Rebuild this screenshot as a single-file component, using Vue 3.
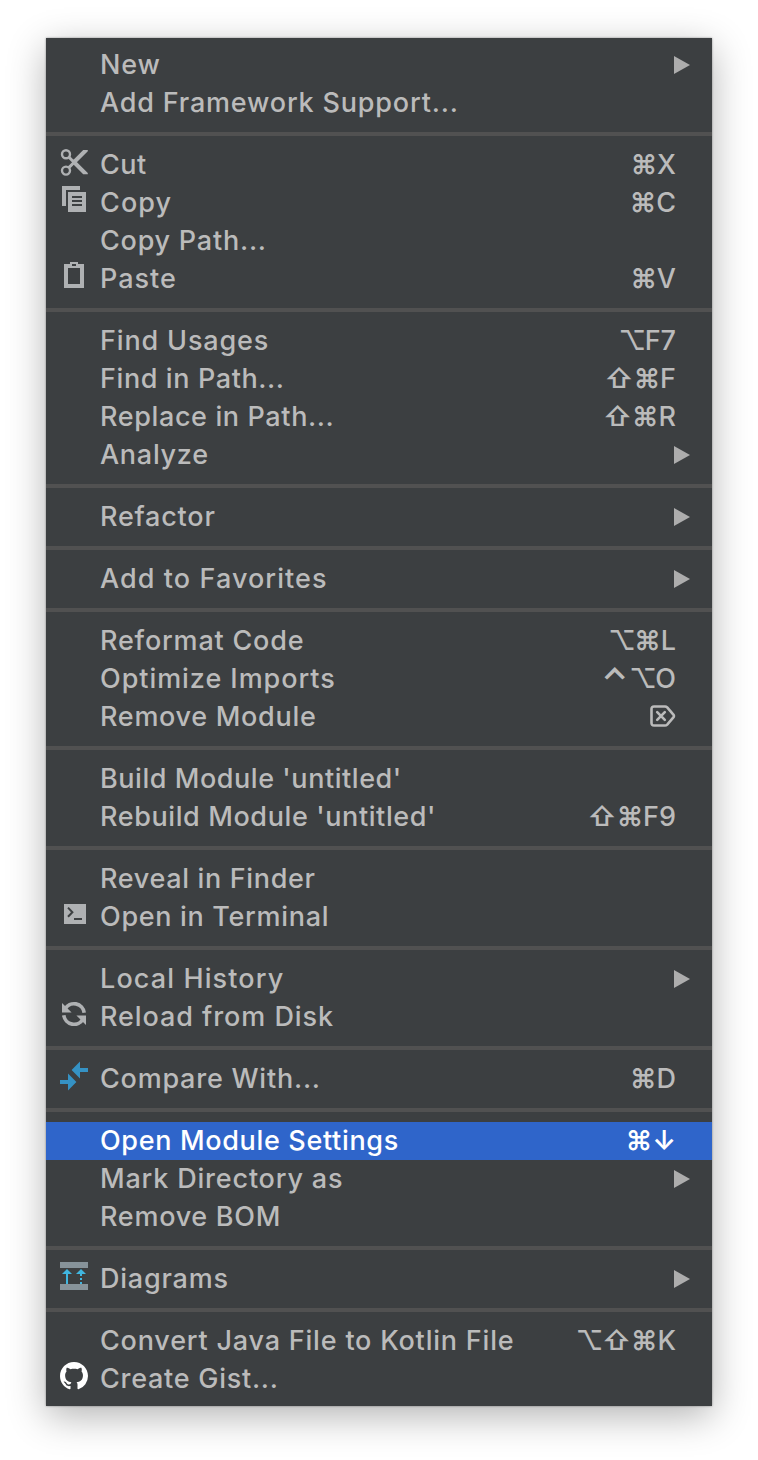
<script setup>
const groups = [
  [{ label: 'New', track: 0.8, sub: true }, { label: 'Add Framework Support...', track: 0.81 }],
  [
    { label: 'Cut', track: 0.5, icon: 'cut', keys: '⌘X' },
    { label: 'Copy', track: 1.1, icon: 'copy', keys: '⌘C' },
    { label: 'Copy Path...', track: 0.77 },
    { label: 'Paste', track: 1, icon: 'paste', keys: '⌘V' },
  ],
  [
    { label: 'Find Usages', track: 0.85, keys: '⌥F7' },
    { label: 'Find in Path...', track: 0.6, keys: '⇧⌘F' },
    { label: 'Replace in Path...', track: 0.62, keys: '⇧⌘R' },
    { label: 'Analyze', track: 0.72, sub: true },
  ],
  [{ label: 'Refactor', track: 0.78, sub: true }],
  [{ label: 'Add to Favorites', track: 1.08, sub: true }],
  [
    { label: 'Reformat Code', track: 0.8, keys: '⌥⌘L' },
    { label: 'Optimize Imports', track: 0.94, keys: '⌃⌥O' },
    { label: 'Remove Module', track: 0.7, keys: '⌦' },
  ],
  [
    { label: "Build Module 'untitled'", track: 0.55 },
    { label: "Rebuild Module 'untitled'", track: 0.6, keys: '⇧⌘F9' },
  ],
  [
    { label: 'Reveal in Finder', track: 0.66 },
    { label: 'Open in Terminal', track: 0.68, icon: 'terminal' },
  ],
  [
    { label: 'Local History', track: 1.12, sub: true },
    { label: 'Reload from Disk', track: 0.93, icon: 'reload' },
  ],
  [{ label: 'Compare With...', track: 0.77, icon: 'compare', keys: '⌘D' }],
  [
    { label: 'Open Module Settings', track: 0.66, keys: '⌘↓', active: true },
    { label: 'Mark Directory as', track: 0.81, sub: true },
    { label: 'Remove BOM', track: 0.72 },
  ],
  [{ label: 'Diagrams', track: 0.78, icon: 'diagrams', sub: true }],
  [
    { label: 'Convert Java File to Kotlin File', track: 0.8, keys: '⌥⇧⌘K' },
    { label: 'Create Gist...', track: 0.73, icon: 'github' },
  ],
]

const keyClass = { '⌃': 'symbol caret', '⌥': 'option', '⌘': 'symbol', '⇧': 'symbol', '↓': 'symbol' }
</script>

<template>
  <main class="stage">
    <div class="menu">
      <div v-for="(group, g) in groups" :key="g" class="group">
        <div v-for="item in group" :key="item.label" class="row" :class="{ active: item.active }">
          <svg class="icon" viewBox="0 0 32 38">
            <g v-if="item.icon === 'cut'" fill="none" stroke="#afb1b3">
              <circle cx="8" cy="8.2" r="4" stroke-width="2.4" />
              <circle cx="8" cy="24.6" r="4" stroke-width="2.4" />
              <path d="M10.8 11L15 15.2M10.8 21.6L15.5 17" stroke-width="3" />
              <path d="M25.2 4H29.8V5.2L18.8 16.2L16 13.2ZM14 14.2L16 13.2L29.8 27V28.2H25.2L14 17Z" fill="#afb1b3" stroke="none" />
            </g>
            <g v-else-if="item.icon === 'copy'" fill="#afb1b3">
              <path d="M4 2H22V6H8V22H4Z" />
              <path fill-rule="evenodd" d="M10 8H28V28H10ZM14 12V14H24V12ZM14 16V18H24V16ZM14 20V22H24V20Z" />
            </g>
            <path v-else-if="item.icon === 'paste'" fill="#afb1b3" fill-rule="evenodd" d="M6 4H12V2H20V4H26V28H6ZM14 4V6H18V4ZM10 8V24H22V8Z" />
            <g v-else-if="item.icon === 'terminal'">
              <path fill="#afb1b3" d="M6 6H28V26H6Z" />
              <path d="M10 9.6L14.4 14.2L10 18.8M16 21H24" fill="none" stroke="#3c3f41" stroke-width="2" />
            </g>
            <g v-else-if="item.icon === 'reload'">
              <path d="M7 11.2A10.2 10.2 0 0 1 26.2 14.8M25 20.8A10.2 10.2 0 0 1 5.8 17.2" fill="none" stroke="#afb1b3" stroke-width="3.6" />
              <path fill="#afb1b3" d="M4 5V14.6H13.6ZM28 27V17.4H18.4Z" />
            </g>
            <path v-else-if="item.icon === 'compare'" fill="#3592c4" d="M13.6 10L22 1.6V8H30V12H22V18.4ZM18.4 22L10 30.4V24H2V20H10V13.6Z" />
            <g v-else-if="item.icon === 'diagrams'">
              <path fill="#87939a" d="M2 2H30V8H2ZM2 24H30V30H2Z" />
              <path fill="#40b6e0" d="M9 9L14 14H10V24H8V14H4ZM23 9L28 14H24V16H22V14H18ZM22 18H24V20H22ZM22 22H24V24H22Z" />
            </g>
            <path
              v-else-if="item.icon === 'github'"
              fill="#fff"
              transform="translate(2 2) scale(1.75)"
              d="M8 0C3.58 0 0 3.58 0 8c0 3.54 2.29 6.53 5.47 7.59.4.07.55-.17.55-.38 0-.19-.01-.82-.01-1.49-2.01.37-2.53-.49-2.69-.94-.09-.23-.48-.94-.82-1.13-.28-.15-.68-.52-.01-.53.63-.01 1.08.58 1.23.82.72 1.21 1.87.87 2.33.66.07-.52.28-.87.51-1.07-1.78-.2-3.64-.89-3.64-3.95 0-.87.31-1.59.82-2.15-.08-.2-.36-1.02.08-2.12 0 0 .67-.21 2.2.82.64-.18 1.32-.27 2-.27s1.36.09 2 .27c1.53-1.04 2.2-.82 2.2-.82.44 1.1.16 1.92.08 2.12.51.56.82 1.27.82 2.15 0 3.07-1.87 3.75-3.65 3.95.29.25.54.73.54 1.48 0 1.07-.01 1.93-.01 2.2 0 .21.15.46.55.38A8.01 8.01 0 0 0 16 8c0-4.42-3.58-8-8-8Z"
            />
          </svg>
          <span class="label" :style="{ letterSpacing: item.track + 'px' }">{{ item.label }}</span>
          <svg v-if="item.keys === '⌦'" class="delete-key" viewBox="0 0 26 22" aria-label="Delete">
            <path d="M4 1.5H15Q16.3 1.5 17.2 2.4L23.6 9.8Q24.4 11 23.6 12.2L17.2 19.6Q16.3 20.5 15 20.5H4Q1.5 20.5 1.5 18V4Q1.5 1.5 4 1.5Z" />
            <path d="M7.2 7.2L14.8 14.8M14.8 7.2L7.2 14.8" />
          </svg>
          <span v-else-if="item.keys" class="keys">
            <span v-for="(k, i) in item.keys" :key="i" :class="keyClass[k]">{{ k }}</span>
          </span>
          <svg v-if="item.sub" class="arrow" viewBox="0 0 16 18"><path d="M0 0L16 9L0 18Z" fill="#adadad" /></svg>
        </div>
      </div>
    </div>
  </main>
</template>

<style>
body {
  background: #fff;
}
</style>

<style scoped>
.stage {
  box-sizing: border-box;
  height: 1460px;
  padding: 38px 46px;
  overflow: hidden;
}
.menu {
  box-sizing: border-box;
  width: 666px;
  height: 1368px;
  padding: 8px 0;
  background: #3c3f41;
  color: #bbb;
  font-family: Inter, 'Liberation Sans', sans-serif;
  font-size: 27px;
  font-weight: 500;
  box-shadow: 0 0 2px rgba(0, 0, 0, 0.4), 0 10px 36px rgba(0, 0, 0, 0.3);
}
.group + .group::before {
  content: '';
  display: block;
  height: 4px;
  margin: 10px 0;
  background: #515151;
}
.row {
  display: flex;
  align-items: center;
  height: 38px;
  padding: 0 22px 0 12px;
  line-height: 38px;
  white-space: nowrap;
}
.active {
  background: #2f65ca;
  color: #fff;
}
.icon {
  width: 32px;
  height: 38px;
  flex: none;
}
.label {
  margin-left: 10px;
}
.keys {
  display: flex;
  margin-left: auto;
  margin-right: 14px;
}
.symbol {
  font-weight: 600;
}
.caret {
  margin-right: 4px;
  transform: translateY(2px) scale(1.25);
}
.option {
  letter-spacing: -1.5px;
}
.delete-key {
  width: 26px;
  height: 22px;
  margin: 0 14px 2px auto;
  fill: none;
  stroke: currentColor;
  stroke-width: 2.6;
  stroke-linecap: round;
  stroke-linejoin: round;
}
.arrow {
  width: 16px;
  height: 18px;
  margin-left: auto;
}
</style>
